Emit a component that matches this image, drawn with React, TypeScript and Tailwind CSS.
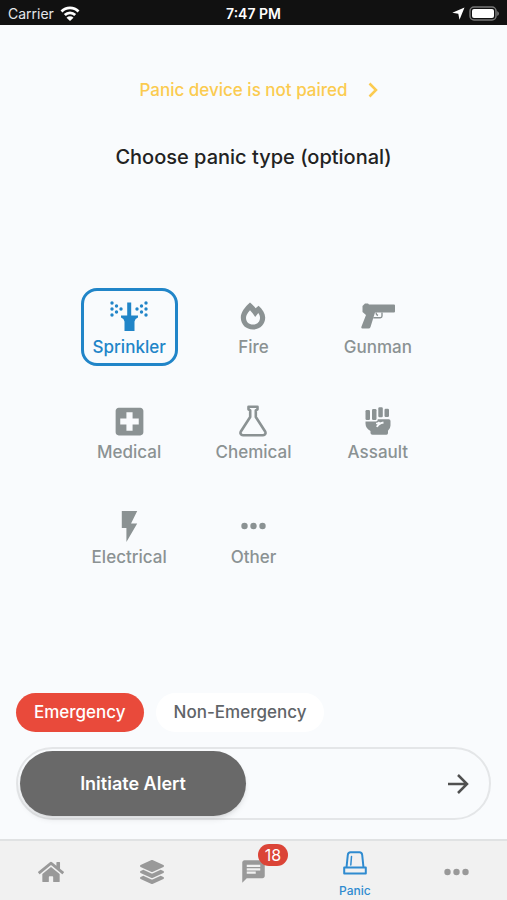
import { useState } from "react";
import type { ReactNode } from "react";
import clsx from "clsx";
import { FaHome, FaLayerGroup } from "react-icons/fa";
import { MdChat, MdFlashOn, MdLocalHospital } from "react-icons/md";

function SprinklerIcon() {
  return (
    <svg width="38" height="30" viewBox="0 0 38 30" fill="currentColor">
      <path d="M17.200 1.500h4v13h6.800v2q-3 1.200-3.500 4V30h-10v-9.500q-.5-2.800-3.500-4v-2h6.200z" />
      <g>
        <circle cx="2" cy="2" r="1.700" />
        <circle cx="2" cy="8" r="1.700" />
        <circle cx="2" cy="14" r="1.700" />
        <circle cx="6.500" cy="5" r="1.700" />
        <circle cx="6.500" cy="11" r="1.700" />
        <circle cx="11" cy="8" r="1.700" />
        <circle cx="36" cy="2" r="1.700" />
        <circle cx="36" cy="8" r="1.700" />
        <circle cx="36" cy="14" r="1.700" />
        <circle cx="31.500" cy="5" r="1.700" />
        <circle cx="31.500" cy="11" r="1.700" />
        <circle cx="27" cy="8" r="1.700" />
      </g>
    </svg>
  );
}

function FireIcon() {
  return (
    <svg width="26" height="28" viewBox="0 0 26 28" fill="currentColor" fillRule="evenodd">
      <path d="M10 0.500C12.500 2.500 14.200 4.300 15.600 6.300L18.600 3.800C22.500 7.500 25.200 11.500 25.200 15.500C25.200 22.500 20 27.500 13 27.500S0.800 22.500 0.800 15.500C0.800 10.500 4.800 5 10 0.500ZM10 8.200C7.500 11 6 13.500 6 15.800C6 19.800 8.800 22.600 13 22.600S20 19.800 20 15.800C20 14.200 19.400 12.500 18.300 11L15.200 15C13.800 12.500 12 10.200 10 8.200Z" />
    </svg>
  );
}

function GunIcon() {
  return (
    <svg width="34" height="26" viewBox="0 0 34 26" fill="currentColor" fillRule="evenodd">
      <path d="M3 1.500 4 .5h3l1 1h25q1 0 1 1V8.500q0 1-1 1H14L9.500 24q-.5 1.500-2 1.500H1.500q-1.700 0-1-2L5 12 1.500 9V3z" />
      <path d="M21 9.500v3.500q0 1.700-1.700 1.700h-7M15 9.500q0 2.200 2 3" fill="none" stroke="currentColor" strokeWidth="1.400" />
    </svg>
  );
}

function FlaskIcon() {
  return (
    <svg width="28" height="32" viewBox="0 0 28 32" fill="none" stroke="currentColor" strokeWidth="2.600" strokeLinecap="round" strokeLinejoin="round">
      <path d="M9.500 1.800h9M9.500 1.800v2.500l1.700 1V12L2 26.200c-1.200 2-.2 4 2 4h20c2.200 0 3.200-2 2-4L16.800 12V5.300l1.700-1V1.800" />
    </svg>
  );
}

function FistIcon() {
  return (
    <svg width="26" height="28" viewBox="0 0 26 28" fill="currentColor">
      <rect x="0.500" y="3" width="4.500" height="10" rx="1.200" />
      <rect x="7" y="2" width="4.500" height="11" rx="1.200" />
      <rect x="13.300" y="0.300" width="4.500" height="10" rx="1.200" />
      <rect x="19.500" y="1.800" width="4.500" height="8.200" rx="1.200" />
      <path d="M.5 14.500h10.500q1.800 0 1.800-2.200h11q1.700 0 1.700 1.700v4.500q0 3-2.500 5.300V26q0 1.700-1.500 1.700h-14Q5.500 27.700 5.500 26v-2Q.5 21 .5 16.500z" />
      <path d="M12 20q1-3.500 6.500-4.500" fill="none" stroke="#f9fbfd" strokeWidth="1.800" />
      <path d="M11 16.500q2.500.2 3.500-1.500" fill="none" stroke="#f9fbfd" strokeWidth="1.500" />
    </svg>
  );
}

function DotsIcon() {
  return (
    <svg width="25" height="8" viewBox="0 0 25 8" fill="currentColor">
      <circle cx="3.500" cy="4" r="3.200" />
      <circle cx="12.500" cy="4" r="3.200" />
      <circle cx="21.500" cy="4" r="3.200" />
    </svg>
  );
}

function SirenIcon() {
  return (
    <svg width="24" height="24" viewBox="0 0 24 24" fill="none" stroke="currentColor" strokeWidth="2" strokeLinejoin="round">
      <path d="M3.500 16.500 4.800 4Q5.100 1.200 7.500 1.200h9Q18.900 1.200 19.200 4l1.300 12.500" />
      <path d="M1.200 16.500h21.600v6H1.200z" />
      <path d="M7.800 14 8.500 5.500" strokeWidth="1.500" strokeLinecap="round" />
    </svg>
  );
}

function WifiIcon() {
  return (
    <svg width="20" height="15" viewBox="0 0 20 15" fill="none" stroke="currentColor" strokeWidth="2.800">
      <path d="M1.500 5.500a12 12 0 0 1 17 0M4.800 9a7.400 7.400 0 0 1 10.400 0" />
      <path d="M10 15 6.500 11.700a5 5 0 0 1 7 0z" fill="currentColor" stroke="none" />
    </svg>
  );
}

function StatusBar() {
  return (
    <header className="grid h-[25px] grid-cols-3 items-center bg-[#111111] px-2 text-sm text-white">
      <div className="flex items-center gap-1.5 pt-0.5">
        <span className="text-gray-200">Carrier</span>
        <WifiIcon />
      </div>
      <div className="pt-0.5 text-center font-semibold">7:47 PM</div>
      <div className="flex items-center justify-end gap-1 pt-0.5">
        <svg width="13" height="13" viewBox="0 0 13 13" fill="currentColor">
          <path d="M12.500.5 7.500 12.800 6.300 6.800.3 5.800z" />
        </svg>
        <svg width="30" height="15" viewBox="0 0 30 15">
          <rect x="1" y="1" width="26" height="13" rx="4" fill="none" stroke="#777" strokeWidth="1.500" />
          <rect x="3" y="3" width="22" height="9" rx="2" fill="#fff" />
          <path d="M28.200 5v5q1.800-1 1.800-2.500t-1.800-2.500" fill="#777" />
        </svg>
      </div>
    </header>
  );
}

const panicTypes: { name: string; icon: ReactNode }[] = [
  { name: "Sprinkler", icon: <SprinklerIcon /> },
  { name: "Fire", icon: <FireIcon /> },
  { name: "Gunman", icon: <GunIcon /> },
  { name: "Medical", icon: <MdLocalHospital size={37} /> },
  { name: "Chemical", icon: <FlaskIcon /> },
  { name: "Assault", icon: <FistIcon /> },
  { name: "Electrical", icon: <MdFlashOn size={37} /> },
  { name: "Other", icon: <DotsIcon /> },
];

const tabs: { name: string; icon: ReactNode; badge?: number }[] = [
  { name: "Home", icon: <FaHome size={26} /> },
  { name: "Layers", icon: <FaLayerGroup size={24} /> },
  { name: "Messages", icon: <MdChat size={27} />, badge: 18 },
  { name: "Panic", icon: <SirenIcon /> },
  { name: "More", icon: <DotsIcon /> },
];

function TabBar() {
  const [tab, setTab] = useState("Panic");

  return (
    <nav className="grid h-[61px] grid-cols-5 border-t-2 border-[#e0e2e3] bg-[#f1f1f1]">
      {tabs.map((item) => (
        <button
          key={item.name}
          type="button"
          aria-label={item.name}
          onClick={() => setTab(item.name)}
          className={clsx(
            "flex flex-col items-center justify-center",
            tab === item.name ? "gap-2 pt-2 text-[#2f8bd0]" : "pt-0.5 text-[#999999]"
          )}
        >
          <span className="relative">
            {item.icon}
            {item.badge && (
              <span className="absolute -top-3.5 left-[18px] flex h-[22px] w-[30px] items-center justify-center rounded-full bg-[#db4437] text-base text-white">
                {item.badge}
              </span>
            )}
          </span>
          {tab === item.name && <span className="text-xs leading-4 font-medium">{item.name}</span>}
        </button>
      ))}
    </nav>
  );
}

function App() {
  const [type, setType] = useState("Sprinkler");
  const [level, setLevel] = useState("Emergency");

  return (
    <div className="flex min-h-screen flex-col bg-[#f9fbfd] font-['Inter',sans-serif]">
      <StatusBar />

      <main className="flex flex-1 flex-col">
        <a href="#pair" className="mt-[53px] flex items-center justify-center gap-5 pl-2.5 text-[17px] leading-6 font-medium text-[#fbcb50]">
          Panic device is not paired
          <svg width="10" height="16" viewBox="0 0 10 16" fill="none" stroke="currentColor" strokeWidth="2.500">
            <path d="M1.500 1.500 8 8l-6.500 6.500" />
          </svg>
        </a>
        <h1 className="mt-[41px] text-center text-xl leading-7 font-medium text-[#222222]">
          Choose panic type (optional)
        </h1>

        <div className="flex flex-1 items-center px-[67px]">
          <div className="grid w-full grid-cols-3 justify-items-center gap-y-[27px]">
            {panicTypes.map((item) => (
              <button
                key={item.name}
                type="button"
                aria-pressed={type === item.name}
                onClick={() => setType(item.name)}
                className={clsx(
                  "flex h-[78px] flex-col items-center rounded-2xl border-[3px] px-[9px] pt-1.5 text-[17px] leading-6 font-medium",
                  type === item.name
                    ? "border-[#2185c8] text-[#2185c8]"
                    : "border-transparent text-[#8b9293]"
                )}
              >
                <span className="flex h-[38px] items-center justify-center">{item.icon}</span>
                {item.name}
              </button>
            ))}
          </div>
        </div>

        <div className="px-4 pb-[19px]">
          <div className="flex gap-3 text-[17px] font-medium">
            {["Emergency", "Non-Emergency"].map((name) => (
              <button
                key={name}
                type="button"
                aria-pressed={level === name}
                onClick={() => setLevel(name)}
                className={clsx(
                  "h-[39px] rounded-full px-[18px]",
                  level === name ? "bg-[#e94a3b] text-white" : "bg-white text-[#5f6468]"
                )}
              >
                {name}
              </button>
            ))}
          </div>

          <div className="mt-[15px] flex h-[73px] items-center justify-between rounded-full border-2 border-[#e4e6e8] p-0.5 pr-5">
            <button
              type="button"
              className="h-full w-[226px] rounded-full bg-[#696969] text-lg font-semibold text-white shadow-md"
            >
              Initiate Alert
            </button>
            <svg width="22" height="22" viewBox="0 0 22 22" fill="none" stroke="#505050" strokeWidth="2.500">
              <path d="M1 11h18.500M11 2l9 9-9 9" />
            </svg>
          </div>
        </div>
      </main>

      <TabBar />
    </div>
  );
}

export default App;
